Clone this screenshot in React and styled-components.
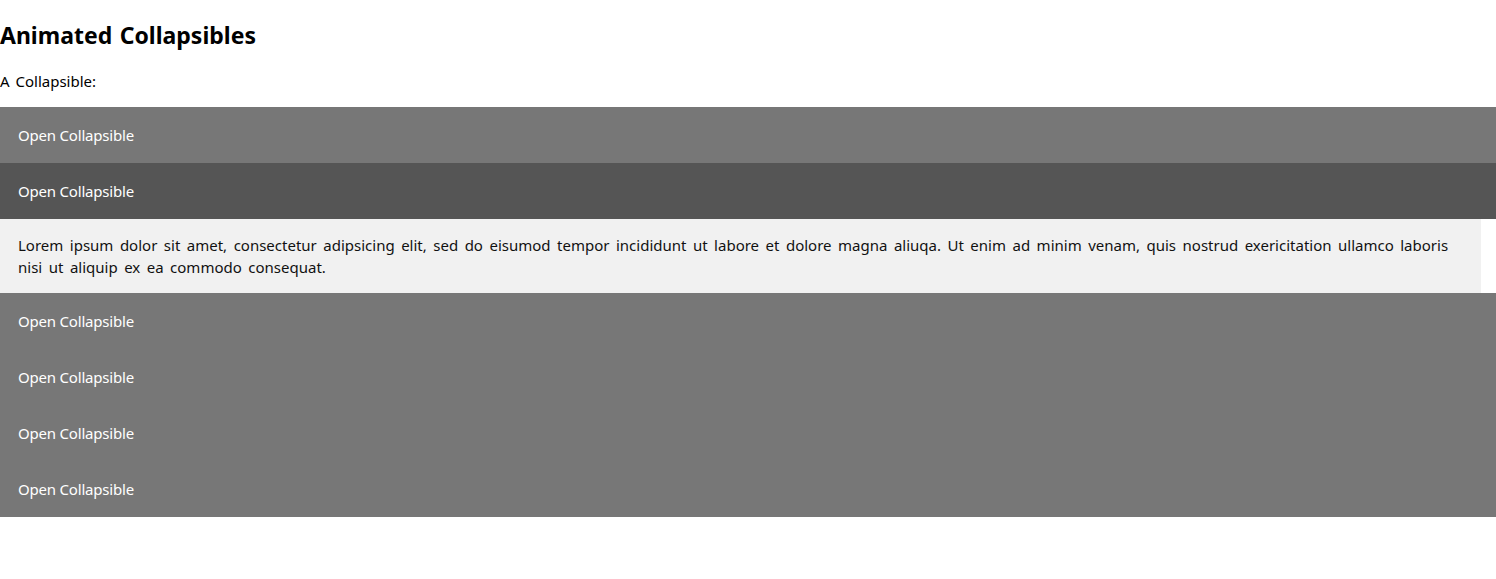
import React, { useState } from 'react'
import styled, { createGlobalStyle } from 'styled-components';

const GlobalStyle = createGlobalStyle`
body {
  margin: 0;
  background: #FFFFFF;
  font-family: 'Noto Sans', 'Noto Sans CJK KR', sans-serif;
  color: #000000;
}
`;

const Title = styled.h2`
margin: 20px 0 20px 0;
font-size: 23px;
line-height: 30px;
font-weight: 700;
word-spacing: 1.5px;
`;

const Intro = styled.p`
margin: 0 0 15px 0;
font-size: 15px;
line-height: 22px;
word-spacing: 2px;
`;

const Button = styled.button`
display: block;
width: 100%;
box-sizing: border-box;
padding: 18px;
border: none;
outline: none;
text-align: left;
font-family: inherit;
font-size: 15px;
line-height: 20px;
letter-spacing: -0.2px;
color: #FFFFFF;
cursor: pointer;
background: ${p => (p.$active ? '#555555' : '#777777')};
&:hover {
  background: #555555;
}
`;

const Content = styled.div`
box-sizing: border-box;
margin-right: 15px;
padding: 0 18px;
background: #F1F1F1;
overflow: hidden;
p {
  margin: 15px 0;
  font-size: 15px;
  line-height: 22px;
  word-spacing: 2.6px;
  color: #111111;
}
`;

const lorem = 'Lorem ipsum dolor sit amet, consectetur adipsicing elit, sed do eisumod tempor incididunt ut labore et dolore magna aliuqa. Ut enim ad minim venam, quis nostrud exericitation ullamco laboris nisi ut aliquip ex ea commodo consequat.';

function Collapsible({ open, onToggle }) {
  return (
    <>
      <Button $active={open} onClick={onToggle}>Open Collapsible</Button>
      {open && <Content><p>{lorem}</p></Content>}
    </>
  )
}

export default function App() {
  const [openIdx, setOpenIdx] = useState(1);
  const items = [0, 1, 2, 3, 4, 5];
  return (
    <>
      <GlobalStyle />
      <Title>Animated Collapsibles</Title>
      <Intro>A Collapsible:</Intro>
      {items.map(i => (
        <Collapsible key={i} open={openIdx === i} onToggle={() => setOpenIdx(openIdx === i ? -1 : i)} />
      ))}
    </>
  )
}
